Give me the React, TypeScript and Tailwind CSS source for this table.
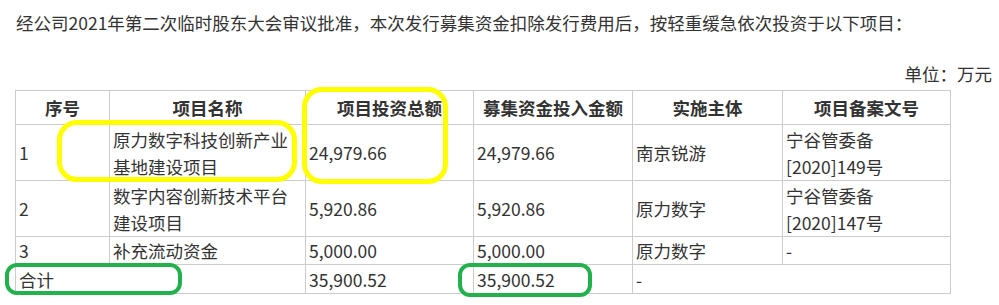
import React from "react";

const font = { fontFamily: '"Noto Sans CJK SC", "Noto Sans", sans-serif' };

type Row = { no: string; name: string[]; total: string; raised: string; org: string; rec: string[] };

const rows: Row[] = [
  { no: "1", name: ["原力数字科技创新产业", "基地建设项目"], total: "24,979.66", raised: "24,979.66", org: "南京锐游", rec: ["宁谷管委备", "[2020]149号"] },
  { no: "2", name: ["数字内容创新技术平台", "建设项目"], total: "5,920.86", raised: "5,920.86", org: "原力数字", rec: ["宁谷管委备", "[2020]147号"] },
  { no: "3", name: ["补充流动资金"], total: "5,000.00", raised: "5,000.00", org: "原力数字", rec: ["-"] },
];

const td = "border border-[#cccccc] px-[3px] py-0 align-middle text-left";
const th = "border border-[#cccccc] px-[3px] py-0 align-middle text-center font-bold";

export default function App() {
  return (
    <div className="relative w-[999px] h-[305px] bg-white text-[#333333] overflow-hidden" style={font}>
      <div className="pl-[16px] pr-[7px] pt-[9px]">
        <p className="text-[17.5px] leading-[27px] whitespace-nowrap">
          经公司2021年第二次临时股东大会审议批准，本次发行募集资金扣除发行费用后，按轻重缓急依次投资于以下项目：
        </p>
        <p className="mt-[24px] text-[17.5px] leading-[27px] text-right">单位：万元</p>
      </div>
      <div className="pl-[15px] mt-[3px]">
        <table className="table-fixed border-collapse w-[935px] text-[17.5px] leading-[27px]">
          <colgroup>
            <col className="w-[94px]" />
            <col className="w-[196px]" />
            <col className="w-[168px]" />
            <col className="w-[159px]" />
            <col className="w-[150px]" />
            <col className="w-[168px]" />
          </colgroup>
          <thead>
            <tr className="h-[34px]">
              <th className={th}>序号</th>
              <th className={th}>项目名称</th>
              <th className={th}>项目投资总额</th>
              <th className={th}>募集资金投入金额</th>
              <th className={th}>实施主体</th>
              <th className={th}>项目备案文号</th>
            </tr>
          </thead>
          <tbody>
            {rows.map((r) => (
              <tr key={r.no} className={r.name.length > 1 ? "h-[56px]" : "h-[28px]"}>
                <td className={td}>{r.no}</td>
                <td className={td}>
                  {r.name.map((l) => (
                    <div key={l}>{l}</div>
                  ))}
                </td>
                <td className={td}>{r.total}</td>
                <td className={td}>{r.raised}</td>
                <td className={td}>{r.org}</td>
                <td className={td}>
                  {r.rec.map((l) => (
                    <div key={l}>{l}</div>
                  ))}
                </td>
              </tr>
            ))}
            <tr className="h-[29px]">
              <td className={td} colSpan={2}>合计</td>
              <td className={td}>35,900.52</td>
              <td className={td}>35,900.52</td>
              <td className={td} colSpan={2}>-</td>
            </tr>
          </tbody>
        </table>
      </div>

      {/* annotations */}
      <div className="absolute left-[57px] top-[120px] w-[240px] h-[62px] border-[5px] border-[#ffff00] rounded-[20px]" />
      <div className="absolute left-[302px] top-[87px] w-[146px] h-[97px] border-[5px] border-[#ffff00] rounded-[20px]" />
      <div className="absolute left-[5px] top-[263px] w-[177px] h-[32px] border-[4px] border-[#22b14c] rounded-[12px]" />
      <div className="absolute left-[458px] top-[263px] w-[134px] h-[34px] border-[4px] border-[#22b14c] rounded-[12px]" />
    </div>
  );
}
